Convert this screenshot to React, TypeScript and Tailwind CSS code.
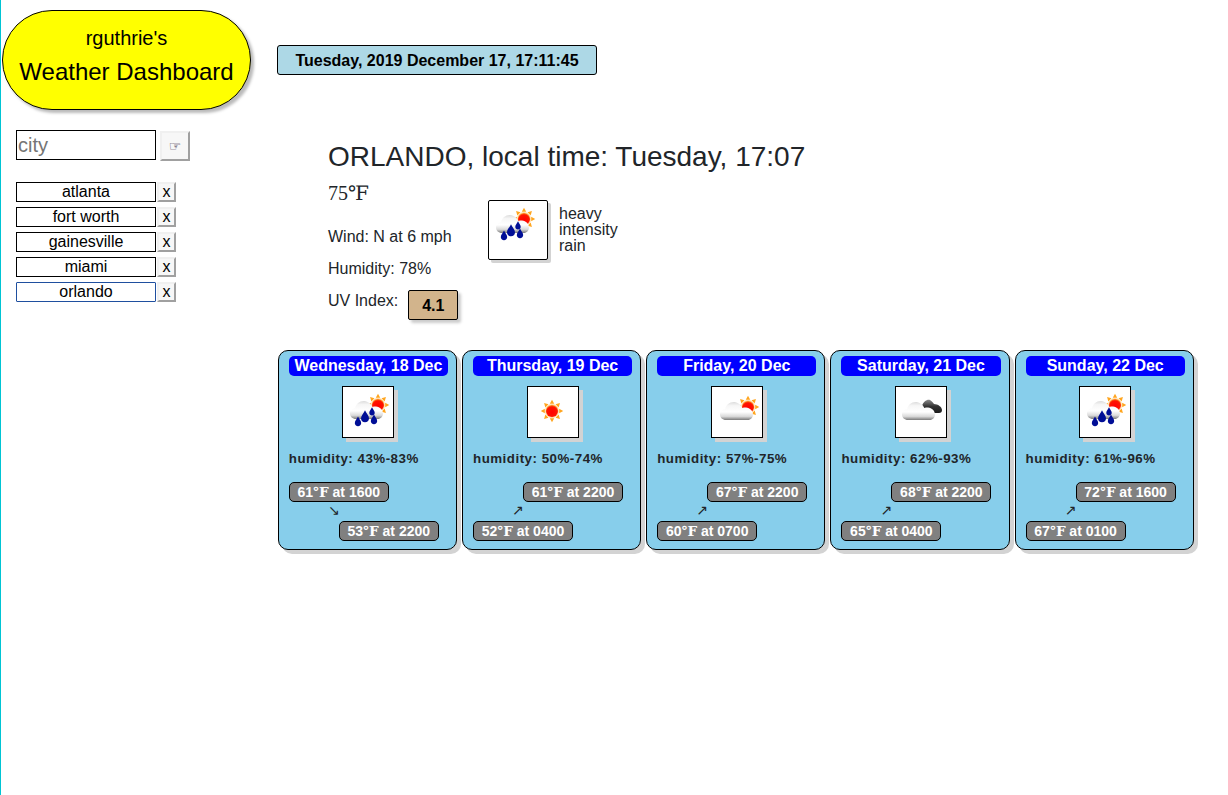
import React from "react";

const btn = "border-2 border-t-[#f0f0f0] border-l-[#f0f0f0] border-b-[#a0a0a0] border-r-[#a0a0a0] bg-[#f7f7f7]";

function Defs() {
  return (
    <svg width="0" height="0" className="absolute">
      <defs>
        <linearGradient id="cloudW" x1="0" y1="0" x2="0" y2="1">
          <stop offset="0" stopColor="#dcdcdc" />
          <stop offset="0.2" stopColor="#f6f6f6" />
          <stop offset="0.55" stopColor="#ffffff" />
          <stop offset="0.8" stopColor="#dadada" />
          <stop offset="1" stopColor="#7a7a7a" />
        </linearGradient>
        <linearGradient id="cloudD" x1="0" y1="0" x2="0" y2="1">
          <stop offset="0" stopColor="#8a8a8a" />
          <stop offset="0.5" stopColor="#333333" />
          <stop offset="1" stopColor="#1c1c1c" />
        </linearGradient>
        <radialGradient id="sunC" cx="0.5" cy="0.6" r="0.6">
          <stop offset="0" stopColor="#ff0000" />
          <stop offset="0.75" stopColor="#ff1500" />
          <stop offset="1" stopColor="#ff9a20" />
        </radialGradient>
      </defs>
    </svg>
  );
}

const CLOUD =
  "M13 32C9.5 32 7 29.5 7 26.5C7 23.5 9.5 21.3 12 21.3C13 17 16.5 14 20.5 14C24.5 14 27.8 16.5 29.3 20C30.3 19.6 31.5 19.5 33 19.5C37 19.7 40 23 40 26.5C40 29.5 37.5 32 35 32Z";

function Sun({ x, y }: { x: number; y: number }) {
  const rays = [0, 45, 90, 135, 180, 225, 270, 315];
  return (
    <g transform={`translate(${x} ${y})`}>
      {rays.map((a) => (
        <path key={a} d="M-2.2 -7.2L0 -11.2L2.2 -7.2Z" fill="#ffa51e" transform={`rotate(${a})`} />
      ))}
      <circle r="7" fill="#ffd9a0" />
      <circle r="6" fill="url(#sunC)" />
    </g>
  );
}

function Drop({ x, y, s = 1 }: { x: number; y: number; s?: number }) {
  return (
    <path
      transform={`translate(${x} ${y}) scale(${s})`}
      d="M0 -5.5C0.8 -3.3 3.2 -1.5 3.2 1C3.2 3 1.8 4.2 0 4.2C-1.8 4.2 -3.2 3 -3.2 1C-3.2 -1.5 -0.8 -3.3 0 -5.5Z"
      fill="#000e96"
    />
  );
}

function WeatherIcon({ kind }: { kind: "rain" | "sun" | "partly" | "overcast" }) {
  return (
    <svg width="50" height="50" viewBox="0 0 50 50" className="block">
      {kind === "sun" && <Sun x={24} y={24} />}
      {kind === "rain" && (
        <>
          <Sun x={35} y={18} />
          <path d={CLOUD} fill="url(#cloudW)" />
          <Drop x={15} y={35} />
          <Drop x={22} y={30} s={1.25} />
          <Drop x={29} y={25} s={0.85} />
          <Drop x={31} y={33} />
        </>
      )}
      {kind === "partly" && (
        <>
          <Sun x={36} y={20} />
          <path d={CLOUD} fill="url(#cloudW)" transform="translate(1 1)" />
        </>
      )}
      {kind === "overcast" && (
        <>
          <path
            d="M29 26C26 25 25 22 26 19C27 15 31 12 34 13C36 14 37 16 38 17C42 17 46 20 46 23C46 25 45 26 43 26Z"
            fill="url(#cloudD)"
          />
          <path d={CLOUD} fill="url(#cloudW)" transform="translate(-1 1)" />
        </>
      )}
    </svg>
  );
}

function Badge({ children, right }: { children: React.ReactNode; right?: boolean }) {
  return (
    <div
      className={`w-[100px] h-5 rounded-[5px] border border-black bg-[#808080] text-white font-bold text-[14px] leading-[18px] text-center ${right ? "ml-[50px]" : ""}`}
    >
      {children}
    </div>
  );
}

function Deg() {
  return <span className="font-['DejaVu_Serif','Liberation_Serif',serif] text-[14px]">℉</span>;
}

type Day = {
  title: string;
  icon: "rain" | "sun" | "partly" | "overcast";
  humidity: string;
  hi: string;
  lo: string;
  down?: boolean;
};

const days: Day[] = [
  { title: "Wednesday, 18 Dec", icon: "rain", humidity: "43%-83%", hi: "61", lo: "53", down: true },
  { title: "Thursday, 19 Dec", icon: "sun", humidity: "50%-74%", hi: "61", lo: "52" },
  { title: "Friday, 20 Dec", icon: "partly", humidity: "57%-75%", hi: "67", lo: "60" },
  { title: "Saturday, 21 Dec", icon: "overcast", humidity: "62%-93%", hi: "68", lo: "65" },
  { title: "Sunday, 22 Dec", icon: "rain", humidity: "61%-96%", hi: "72", lo: "67" },
];
const times: [string, string][] = [
  ["1600", "2200"],
  ["2200", "0400"],
  ["2200", "0700"],
  ["2200", "0400"],
  ["1600", "0100"],
];

function Card({ d, i }: { d: Day; i: number }) {
  const [hiT, loT] = times[i];
  return (
    <div className="h-[200px] rounded-[10px] border border-black bg-[#87ceeb] shadow-[4px_4px_0_#d3d3d3] pl-[10px] pr-[8px] pt-[5px]">
      <div className="h-5 rounded-[5px] bg-[#0000ff] text-white font-bold text-[16px] leading-5 text-center">
        {d.title}
      </div>
      <div className="w-[52px] h-[52px] mx-auto mt-[10px] border border-black bg-white shadow-[4px_4px_0_#d3d3d3]">
        <WeatherIcon kind={d.icon} />
      </div>
      <div className="mt-[13px] font-bold text-[13.33px] leading-4 tracking-[0.5px] text-[#212529]">
        humidity: {d.humidity}
      </div>
      <div className="mt-[15px]">
        {d.down ? (
          <Badge>
            {d.hi}
            <Deg /> at {hiT}
          </Badge>
        ) : (
          <Badge right>
            {d.hi}
            <Deg /> at {hiT}
          </Badge>
        )}
        <div className="h-[19px] leading-[16px] text-[14px] text-[#212529] w-[90px] text-center font-['DejaVu_Sans',sans-serif]">
          {d.down ? "↘" : "↗"}
        </div>
        {d.down ? (
          <Badge right>
            {d.lo}
            <Deg /> at {loT}
          </Badge>
        ) : (
          <Badge>
            {d.lo}
            <Deg /> at {loT}
          </Badge>
        )}
      </div>
    </div>
  );
}

export default function App() {
  const cities = ["atlanta", "fort worth", "gainesville", "miami", "orlando"];
  return (
    <div className="min-h-screen border-l border-[#00c4d4] bg-white flex font-['Liberation_Sans',Arial,sans-serif] text-[#212529]">
      <Defs />
      <aside className="w-[276px] shrink-0 pt-[10px] pl-[1px]">
        <div className="w-[249px] h-[100px] rounded-[50px] border border-black bg-[#ffff00] shadow-[3px_3px_3px_#bbbbbb] text-black text-center pt-[15px]">
          <div className="text-[20px] leading-[24px]">rguthrie's</div>
          <div className="text-[24px] leading-[28px] mt-[8px]">Weather Dashboard</div>
        </div>
        <div className="ml-[14px] mt-[20px] flex items-start gap-1">
          <input
            placeholder="city"
            className="w-[140px] h-[30px] border border-black px-[1px] text-[20px] outline-none placeholder:text-[#757575] bg-white"
          />
          <button className={`${btn} w-[30px] h-[30px] mt-[1px] text-[14px] leading-none text-[#2e1a38] font-['DejaVu_Sans',sans-serif]`}>
            ☞
          </button>
        </div>
        <div className="ml-[14px] mt-[21px] flex flex-col gap-[5px]">
          {cities.map((c) => (
            <div key={c} className="flex items-start gap-[1px]">
              <div
                className={`w-[140px] h-5 text-center text-[16px] leading-[18px] text-black border ${c === "orlando" ? "border-[#1f4f9f] rounded-[1px]" : "border-black"}`}
              >
                {c}
              </div>
              <button className={`${btn} w-[19px] h-5 text-[16px] leading-[14px] text-black`}>x</button>
            </div>
          ))}
        </div>
      </aside>
      <main className="flex-1 pt-[45px]">
        <div className="w-[320px] h-[30px] rounded-[3px] border border-black bg-[#add8e6] text-black font-bold text-[16px] leading-[30px] text-center">
          Tuesday, 2019 December 17, 17:11:45
        </div>
        <div className="ml-[51px] mt-[64px]">
          <h1 className="text-[28px] leading-[36px]">ORLANDO, local time: Tuesday, 17:07</h1>
          <div className="flex">
            <div className="w-[160px]">
              <div className="mt-[6px] text-[20px] leading-[24px] font-['Liberation_Serif',serif]">
                75<span className="font-['DejaVu_Serif',serif] text-[20px]">℉</span>
              </div>
              <div className="mt-[20px] text-[16px] leading-[24px]">Wind: N at 6 mph</div>
              <div className="mt-[8px] text-[16px] leading-[24px]">Humidity: 78%</div>
              <div className="mt-[8px] flex items-start">
                <span className="text-[16px] leading-[24px]">UV Index:</span>
                <div className="ml-[10px] mt-[1px] w-[50px] h-[30px] rounded-[2px] border border-black bg-[#d2b48c] shadow-[3px_3px_3px_#cccccc] text-black font-bold text-[16px] leading-[30px] text-center">
                  4.1
                </div>
              </div>
            </div>
            <div className="mt-[25px] w-[60px] h-[60px] rounded-[2px] border border-black bg-white shadow-[3px_3px_0_#d3d3d3]">
              <WeatherIcon kind="rain" />
            </div>
            <div className="ml-[11px] mt-[31px] w-[70px] text-[16px] leading-[16px]">heavy intensity rain</div>
          </div>
        </div>
        <div className="ml-[0.8px] mt-[30px] w-[916px] grid grid-cols-5 gap-[5px]">
          {days.map((d, i) => (
            <Card key={d.title} d={d} i={i} />
          ))}
        </div>
      </main>
    </div>
  );
}
